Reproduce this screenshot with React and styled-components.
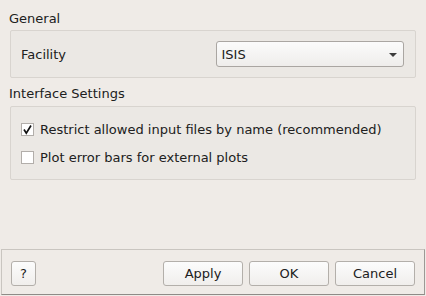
import React from "react";
import styled, { createGlobalStyle } from "styled-components";

const Global = createGlobalStyle`
  html, body { margin: 0; padding: 0; background: #efebe7; }
  body { font-family: "DejaVu Sans", sans-serif; font-size: 13px; color: #202020; }
`;

const Dialog = styled.div`
  width: 426px;
  height: 296px;
  display: flex;
  flex-direction: column;
  background: #efebe7;
  box-sizing: border-box;
`;

const Content = styled.div`
  flex: 1;
  display: flex;
  flex-direction: column;
  padding: 11px 10px 0 10px;
`;

const SectionTitle = styled.div`
  height: 15px;
  line-height: 15px;
  margin-left: -1px;
  margin-top: ${(p) => (p.$first ? "0" : "8px")};
  margin-bottom: ${(p) => (p.$first ? "4px" : "5px")};
`;

const Group = styled.div`
  border: 1px solid #d8d4cf;
  border-radius: 2px;
  background: #ebe8e4;
  padding: ${(p) => p.$pad};
`;

const FormRow = styled.div`
  display: grid;
  grid-template-columns: 1fr 1fr;
  column-gap: 6px;
  align-items: center;
`;

const Combo = styled.div`
  height: 26px;
  box-sizing: border-box;
  border: 1px solid #aaa6a2;
  border-radius: 3px;
  background: linear-gradient(#fbfbfb, #efedeb);
  display: flex;
  align-items: center;
  justify-content: space-between;
  padding: 0 6px 0 5px;
`;

const Arrow = styled.span`
  width: 0;
  height: 0;
  border-left: 4px solid transparent;
  border-right: 4px solid transparent;
  border-top: 4px solid #3c3c3c;
  margin-top: 1px;
`;

const CheckList = styled.div`
  display: flex;
  flex-direction: column;
  gap: 8px;
`;

const CheckRow = styled.label`
  height: 20px;
  display: flex;
  align-items: center;
  gap: 6px;
`;

const Box = styled.span`
  width: 13px;
  height: 13px;
  box-sizing: border-box;
  border: 1px solid #b2aeaa;
  background: #ffffff;
  display: flex;
  align-items: center;
  justify-content: center;
`;

const Footer = styled.div`
  margin: 0 1px 1px 1px;
  height: 46px;
  box-sizing: border-box;
  border-top: 1px solid #c9c5c0;
  border-left: 1px solid #c9c5c0;
  border-right: 1px solid #9c9995;
  border-bottom: 1px solid #8e8b87;
  display: flex;
  align-items: flex-start;
  padding: 11px 9px 0 9px;
  gap: 6px;
`;

const Button = styled.button`
  width: ${(p) => p.$w}px;
  height: 25px;
  box-sizing: border-box;
  border: 1px solid #b3afaa;
  border-radius: 3px;
  background: linear-gradient(#fcfcfc, #f0eeec);
  font-family: "DejaVu Sans", sans-serif;
  font-size: 13px;
  color: #202020;
  padding: 0;
  margin-left: ${(p) => (p.$push ? "auto" : "0")};
`;

function Check({ checked, children }) {
  return (
    <CheckRow>
      <Box>
        {checked && (
          <svg width="11" height="11" viewBox="0 0 11 11">
            <path d="M2 5.5 L4.3 9.2 L9 1.5" fill="none" stroke="#111" strokeWidth="1.7" />
          </svg>
        )}
      </Box>
      <span>{children}</span>
    </CheckRow>
  );
}

export default function App() {
  return (
    <>
      <Global />
      <Dialog>
        <Content>
          <SectionTitle $first>General</SectionTitle>
          <Group $pad="10px 11px 10px 10px">
            <FormRow>
              <span>Facility</span>
              <Combo>
                <span>ISIS</span>
                <Arrow />
              </Combo>
            </FormRow>
          </Group>
          <SectionTitle>Interface Settings</SectionTitle>
          <Group $pad="12px 10px">
            <CheckList>
              <Check checked>Restrict allowed input files by name (recommended)</Check>
              <Check>Plot error bars for external plots</Check>
            </CheckList>
          </Group>
        </Content>
        <Footer>
          <Button $w={25}>?</Button>
          <Button $w={80} $push>Apply</Button>
          <Button $w={80}>OK</Button>
          <Button $w={80}>Cancel</Button>
        </Footer>
      </Dialog>
    </>
  );
}
